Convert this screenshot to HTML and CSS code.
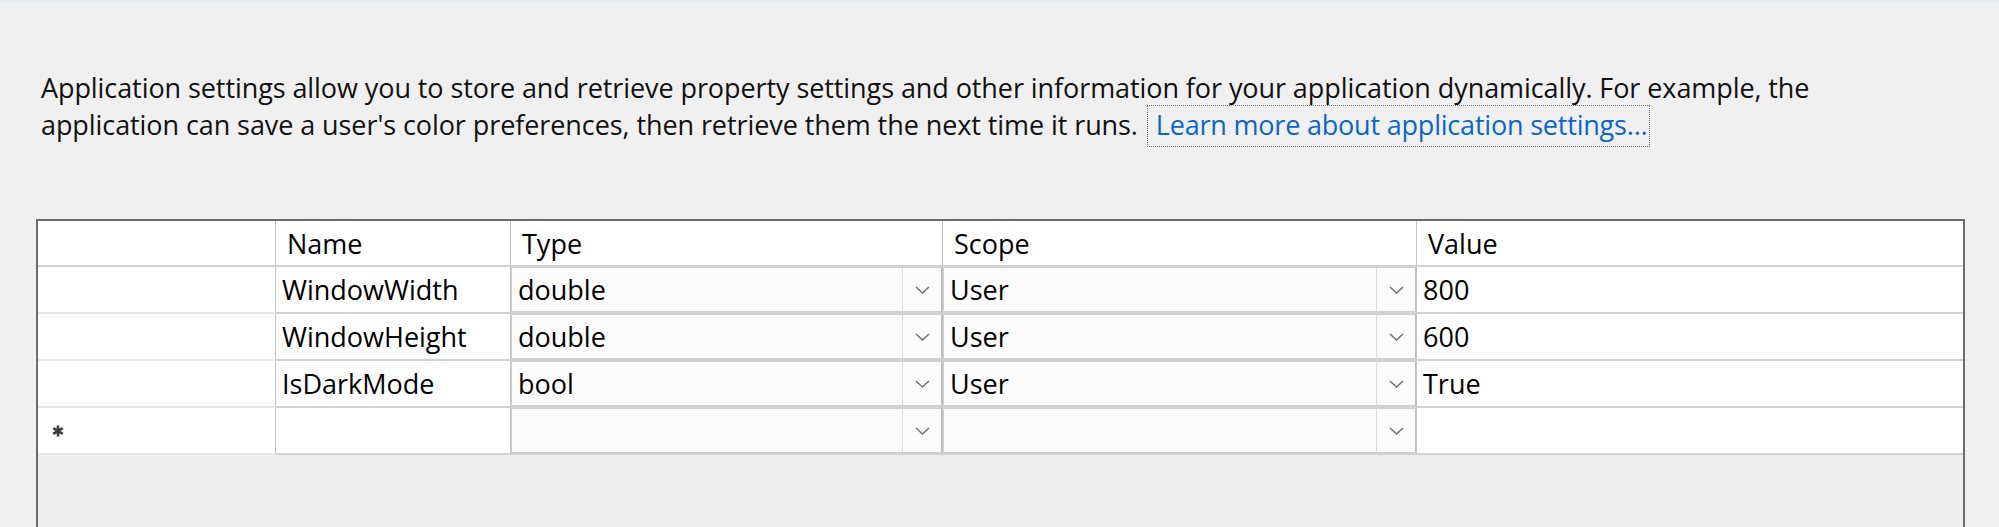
FILE: index.html
```html
<!DOCTYPE html>
<html lang="en">
<head>
<meta charset="utf-8">
<title>Settings</title>
<link rel="stylesheet" href="styles.css">
</head>
<body>
<div class="page">
  <p class="intro">Application settings allow you to store and retrieve property settings and other information for your application dynamically. For example, the<br>application can save a user's color preferences, then retrieve them the next time it runs. <a class="learn" href="#">Learn more about application settings...</a></p>

  <div class="grid">
    <div class="cell rowhdr hdr"></div>
    <div class="cell hdr">Name</div>
    <div class="cell hdr">Type</div>
    <div class="cell hdr">Scope</div>
    <div class="cell hdr last">Value</div>

    <div class="cell rowhdr"></div>
    <div class="cell text">WindowWidth</div>
    <div class="cell combo-cell"><div class="combo"><span class="combo-text">double</span><span class="combo-btn"><svg class="chev" viewBox="0 0 15 8"><path d="M1 1 L7.5 7 L14 1"/></svg></span></div></div>
    <div class="cell combo-cell"><div class="combo"><span class="combo-text">User</span><span class="combo-btn"><svg class="chev" viewBox="0 0 15 8"><path d="M1 1 L7.5 7 L14 1"/></svg></span></div></div>
    <div class="cell text last">800</div>

    <div class="cell rowhdr"></div>
    <div class="cell text">WindowHeight</div>
    <div class="cell combo-cell"><div class="combo"><span class="combo-text">double</span><span class="combo-btn"><svg class="chev" viewBox="0 0 15 8"><path d="M1 1 L7.5 7 L14 1"/></svg></span></div></div>
    <div class="cell combo-cell"><div class="combo"><span class="combo-text">User</span><span class="combo-btn"><svg class="chev" viewBox="0 0 15 8"><path d="M1 1 L7.5 7 L14 1"/></svg></span></div></div>
    <div class="cell text last">600</div>

    <div class="cell rowhdr"></div>
    <div class="cell text">IsDarkMode</div>
    <div class="cell combo-cell"><div class="combo"><span class="combo-text">bool</span><span class="combo-btn"><svg class="chev" viewBox="0 0 15 8"><path d="M1 1 L7.5 7 L14 1"/></svg></span></div></div>
    <div class="cell combo-cell"><div class="combo"><span class="combo-text">User</span><span class="combo-btn"><svg class="chev" viewBox="0 0 15 8"><path d="M1 1 L7.5 7 L14 1"/></svg></span></div></div>
    <div class="cell text last">True</div>

    <div class="cell rowhdr"><svg class="star" viewBox="0 0 12 12"><path d="M6 0.5 V11.5 M1.2 3.2 L10.8 8.8 M1.2 8.8 L10.8 3.2"/></svg></div>
    <div class="cell text"></div>
    <div class="cell combo-cell"><div class="combo"><span class="combo-text"></span><span class="combo-btn"><svg class="chev" viewBox="0 0 15 8"><path d="M1 1 L7.5 7 L14 1"/></svg></span></div></div>
    <div class="cell combo-cell"><div class="combo"><span class="combo-text"></span><span class="combo-btn"><svg class="chev" viewBox="0 0 15 8"><path d="M1 1 L7.5 7 L14 1"/></svg></span></div></div>
    <div class="cell text last"></div>
  </div>
</div>
</body>
</html>
```

FILE: styles.css
```css
html, body {
  margin: 0;
  padding: 0;
  overflow: hidden;
  background: #f0f0f0;
}

body {
  border-top: 1px solid #e4ecf6;
  font-family: "Open Sans", "Noto Sans", sans-serif;
  font-size: 27px;
  color: #000;
}

.page {
  padding: 68px 34px 0 36px;
}

.intro {
  margin: 0 0 0 5px;
  line-height: 37px;
  color: #111;
  white-space: nowrap;
  letter-spacing: -0.08px;
}

.learn {
  color: #0a66cc;
  text-decoration: none;
  border: 1px dotted #6d6d6d;
  padding: 0 2px 3px 8px;
  margin-left: 2px;
  letter-spacing: -0.2px;
}

.grid {
  margin-top: 76px;
  height: 340px;
  border: 2px solid #6b6b6b;
  border-bottom: none;
  background: #efefef;
  display: grid;
  grid-template-columns: 238px 235px 432px 474px 1fr;
  grid-auto-rows: 47px;
  grid-template-rows: 46px;
  align-content: start;
}

.cell {
  background: #fff;
  border-right: 1px solid #c4c4c4;
  border-bottom: 2px solid #d2d2d2;
  display: flex;
  align-items: center;
  box-sizing: border-box;
  white-space: nowrap;
  overflow: hidden;
}

.cell.last {
  border-right: none;
}

.hdr {
  padding: 1px 0 0 11px;
  color: #000;
}

.rowhdr {
  border-bottom-color: #e8e8e8;
  padding-left: 14px;
}

.rowhdr.hdr {
  border-bottom-color: #d2d2d2;
}

.text {
  padding-left: 6px;
}

.combo-cell {
  align-items: stretch;
}

.combo {
  flex: 1;
  display: flex;
  align-items: center;
  background: #fcfcfc;
  border: 1px solid #cfcfcf;
  border-right-color: #bdbdbd;
}

.combo-text {
  flex: 1;
  padding-left: 6px;
}

.combo-btn {
  width: 38px;
  align-self: stretch;
  border-left: 1px solid #dcdcdc;
  display: flex;
  align-items: center;
  justify-content: center;
}

.chev {
  width: 15px;
  height: 8px;
  fill: none;
  stroke: #707070;
  stroke-width: 1.5;
}

.star {
  width: 12px;
  height: 12px;
  fill: none;
  stroke: #3c3c3c;
  stroke-width: 2.6;
}
```
